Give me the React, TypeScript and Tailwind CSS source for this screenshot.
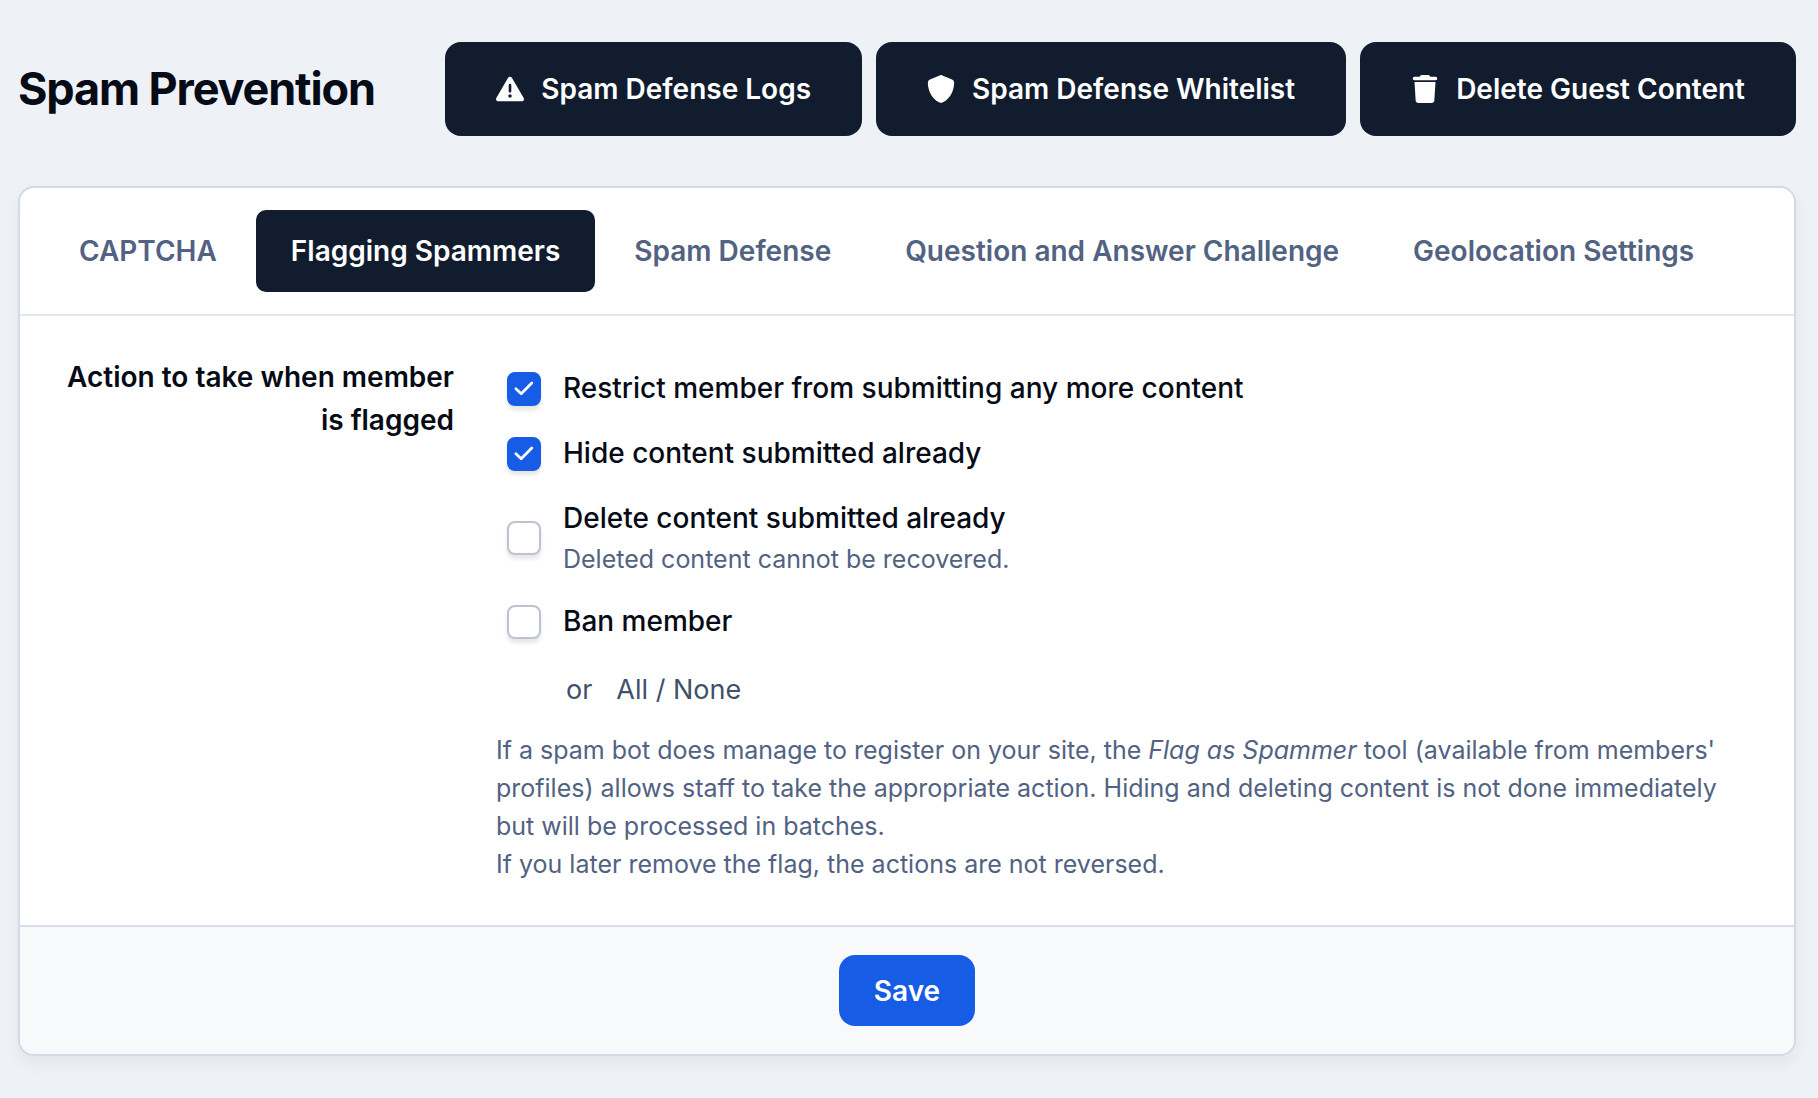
import { useState } from "react";
import type { ReactNode } from "react";

type Action = {
  id: string;
  label: string;
  description?: string;
};

const ACTIONS: Action[] = [
  { id: "restrict", label: "Restrict member from submitting any more content" },
  { id: "hide", label: "Hide content submitted already" },
  {
    id: "delete",
    label: "Delete content submitted already",
    description: "Deleted content cannot be recovered.",
  },
  { id: "ban", label: "Ban member" },
];

const TABS = [
  "CAPTCHA",
  "Flagging Spammers",
  "Spam Defense",
  "Question and Answer Challenge",
  "Geolocation Settings",
];

function WarningIcon() {
  return (
    <svg viewBox="0 0 512 512" className="size-7" fill="currentColor" aria-hidden="true">
      <path d="M256 32c14.200 0 27.300 7.500 34.500 19.800l216 368c7.300 12.400 7.300 27.700 .2 40.100S486.300 480 472 480H40c-14.300 0-27.600-7.700-34.700-20.100s-7-27.800 .2-40.100l216-368C228.700 39.500 241.800 32 256 32zm0 128c-13.300 0-24 10.700-24 24V296c0 13.300 10.700 24 24 24s24-10.700 24-24V184c0-13.300-10.700-24-24-24zm32 224a32 32 0 1 0-64 0 32 32 0 1 0 64 0z" />
    </svg>
  );
}

function ShieldIcon() {
  return (
    <svg viewBox="0 0 512 512" className="size-7" fill="currentColor" aria-hidden="true">
      <path d="M256 0c4.600 0 9.200 1 13.400 2.900L457.700 82.800c22 9.300 38.400 31 38.300 57.200c-.5 99.200-41.300 280.700-213.600 363.200c-16.700 8-36.100 8-52.800 0C57.300 420.700 16.500 239.200 16 140c-.1-26.200 16.300-47.900 38.300-57.200L242.700 2.900C246.800 1 251.400 0 256 0z" />
    </svg>
  );
}

function TrashIcon() {
  return (
    <svg viewBox="0 0 448 512" className="size-7" fill="currentColor" aria-hidden="true">
      <path d="M135.200 17.700L128 32H32C14.300 32 0 46.300 0 64S14.300 96 32 96H416c17.700 0 32-14.300 32-32s-14.300-32-32-32H320l-7.200-14.300C307.400 6.800 296.300 0 284.200 0H163.800c-12.100 0-23.200 6.800-28.600 17.700zM416 128H32L53.200 467c1.600 25.300 22.600 45 47.900 45H346.900c25.300 0 46.300-19.700 47.900-45L416 128z" />
    </svg>
  );
}

function HeaderButton({ icon, children }: { icon: ReactNode; children: ReactNode }) {
  return (
    <button
      type="button"
      className="flex h-[94px] items-center gap-[17px] rounded-2xl bg-[#121c2f] px-[51px] font-semibold whitespace-nowrap text-white"
    >
      {icon}
      {children}
    </button>
  );
}

function ActionRow({
  action,
  checked,
  onChange,
}: {
  action: Action;
  checked: boolean;
  onChange: (checked: boolean) => void;
}) {
  return (
    <div className="flex items-center gap-[22px]">
      <span className="grid shrink-0">
        <input
          id={action.id}
          type="checkbox"
          checked={checked}
          onChange={(e) => onChange(e.target.checked)}
          className="col-start-1 row-start-1 size-[34px] appearance-none rounded-lg border-2 border-[#bcc3d0] bg-white shadow-[0_4px_4px_rgba(0,0,0,0.1)] checked:border-[#175ce5] checked:bg-[#175ce5]"
        />
        {checked && (
          <svg
            viewBox="0 0 34 34"
            className="pointer-events-none col-start-1 row-start-1 size-[34px]"
            fill="none"
            stroke="white"
            strokeWidth="2.7"
            strokeLinecap="round"
            strokeLinejoin="round"
            aria-hidden="true"
          >
            <path d="M8.900 16.800L14.200 21.800L24.800 11" />
          </svg>
        )}
      </span>
      <div>
        <label htmlFor={action.id} className="block leading-[43px] font-medium">
          {action.label}
        </label>
        {action.description && (
          <p className="text-[25px] leading-[38px] text-[#526282]">{action.description}</p>
        )}
      </div>
    </div>
  );
}

export default function App() {
  const [tab, setTab] = useState("Flagging Spammers");
  const [selected, setSelected] = useState<string[]>(["restrict", "hide"]);

  const toggle = (id: string, on: boolean) =>
    setSelected((prev) => (on ? [...prev, id] : prev.filter((x) => x !== id)));

  return (
    <div className="min-h-screen bg-[#eef1f6] pt-[42px] pr-[22px] pb-[42px] pl-[18px] font-['Inter',sans-serif] text-[28px] text-[#060b16]">
      {/* Page header */}
      <header className="flex items-center justify-between">
        <h1 className="text-[45px] leading-[56px] font-bold tracking-tight whitespace-nowrap">
          Spam Prevention
        </h1>
        <div className="flex gap-[14px]">
          <HeaderButton icon={<WarningIcon />}>Spam Defense Logs</HeaderButton>
          <HeaderButton icon={<ShieldIcon />}>Spam Defense Whitelist</HeaderButton>
          <HeaderButton icon={<TrashIcon />}>Delete Guest Content</HeaderButton>
        </div>
      </header>

      <main className="mt-[50px] overflow-hidden rounded-2xl border-2 border-[#d3dae5] bg-white shadow-[0_8px_16px_rgba(0,0,0,0.05)]">
        {/* Tabs */}
        <nav className="flex gap-1 border-b-2 border-[#e3e7ec] px-6 py-[22px]">
          {TABS.map((name) => (
            <button
              key={name}
              type="button"
              onClick={() => setTab(name)}
              className={
                name === tab
                  ? "h-[82px] rounded-[10px] bg-[#121c2f] px-[35px] font-semibold whitespace-nowrap text-white"
                  : "h-[82px] rounded-[10px] px-[35px] font-semibold whitespace-nowrap text-[#526282]"
              }
            >
              {name}
            </button>
          ))}
        </nav>

        <form onSubmit={(e) => e.preventDefault()}>
          <div className="flex gap-[42px] pt-10 pr-[60px] pb-[42px] pl-7">
            <h2 className="w-[406px] shrink-0 text-right leading-[43px] font-semibold">
              Action to take when member is flagged
            </h2>

            <div className="min-w-0 flex-1">
              <div className="flex flex-col gap-[22px] pt-[11px] pl-[11px]">
                {ACTIONS.map((action) => (
                  <ActionRow
                    key={action.id}
                    action={action}
                    checked={selected.includes(action.id)}
                    onChange={(on) => toggle(action.id, on)}
                  />
                ))}
              </div>

              <div className="mt-[25px] flex pl-[70px] text-[27px] leading-[43px] text-[#42506b]">
                <span className="mr-6">or</span>
                <button type="button" onClick={() => setSelected(ACTIONS.map((a) => a.id))}>
                  All
                </button>
                <span className="whitespace-pre"> / </span>
                <button type="button" onClick={() => setSelected([])}>
                  None
                </button>
              </div>

              <p className="mt-5 text-[25px] leading-[38px] text-[#526282]">
                If a spam bot does manage to register on your site, the <em>Flag as Spammer</em>{" "}
                tool (available from members' profiles) allows staff to take the appropriate
                action. Hiding and deleting content is not done immediately but will be processed
                in batches.
                <br />
                If you later remove the flag, the actions are not reversed.
              </p>
            </div>
          </div>

          {/* Form footer */}
          <div className="flex justify-center border-t-2 border-[#d8deea] bg-[#f8f9fb] py-7">
            <button
              type="submit"
              className="h-[71px] rounded-2xl bg-[#175ce5] px-[35px] font-semibold text-white"
            >
              Save
            </button>
          </div>
        </form>
      </main>
    </div>
  );
}
